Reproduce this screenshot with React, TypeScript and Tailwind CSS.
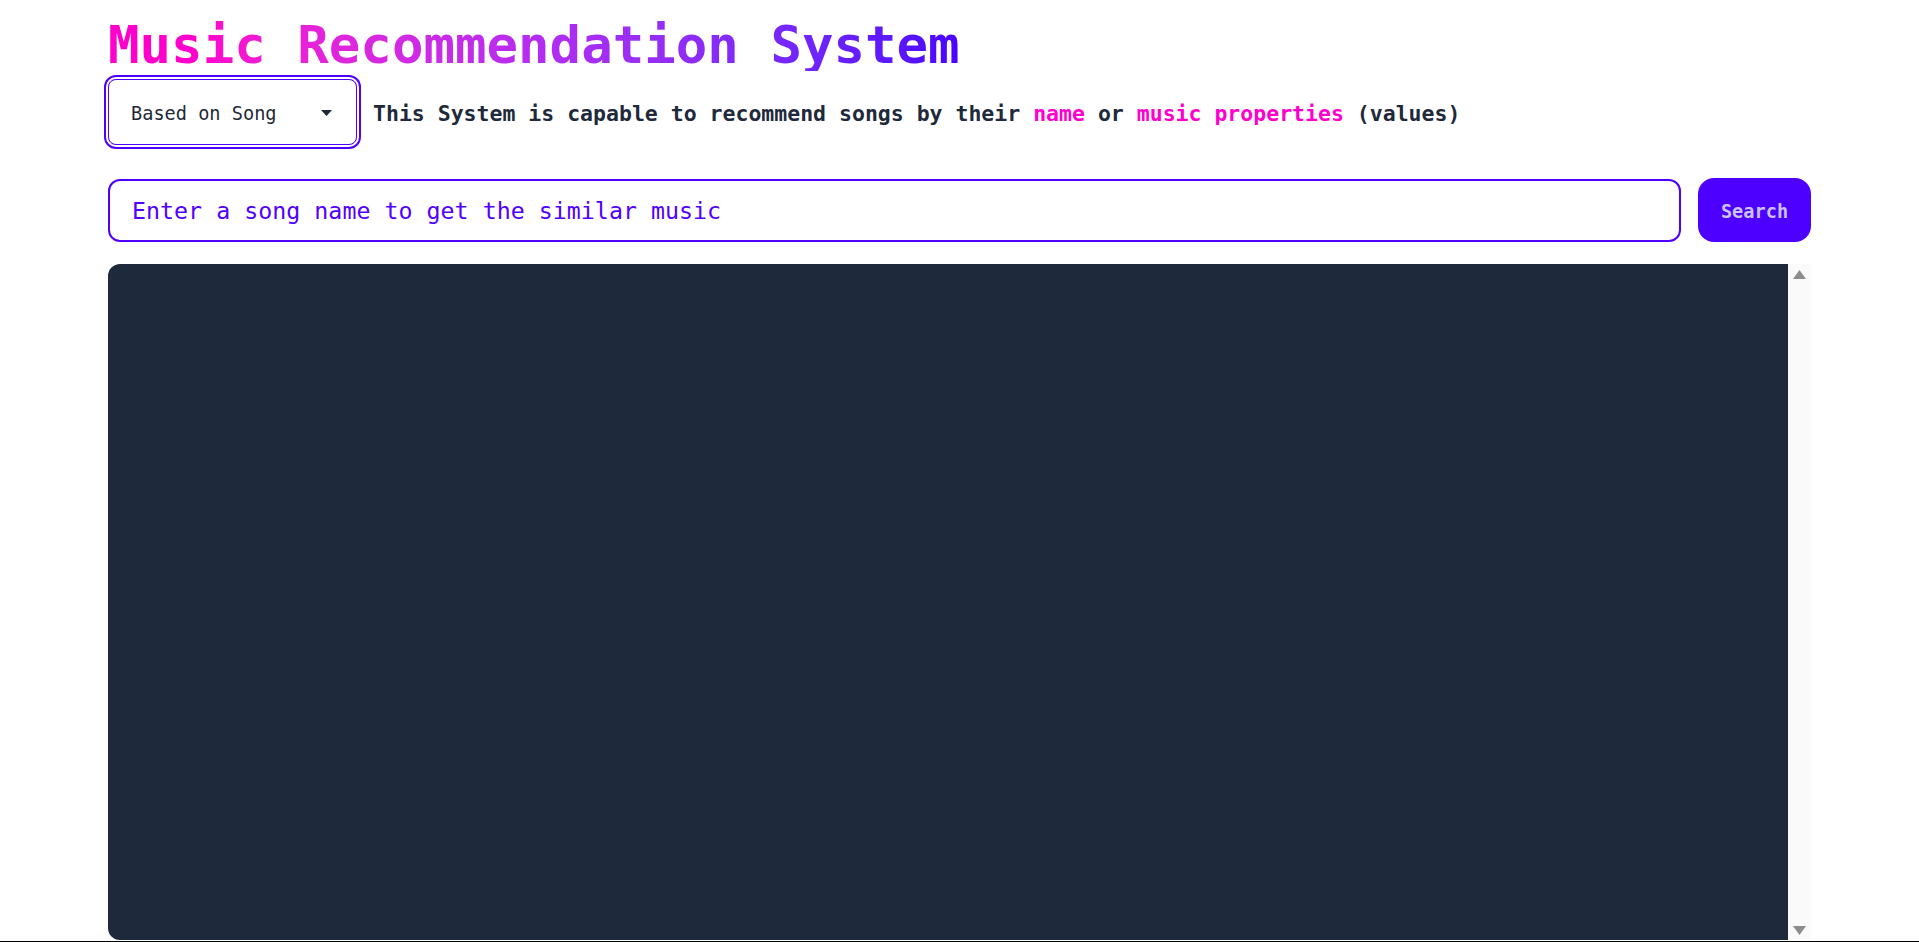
import React from "react";

const mono = { fontFamily: '"DejaVu Sans Mono", "Liberation Mono", monospace' };

export default function App() {
  return (
    <div className="h-[942px] w-full overflow-hidden bg-white flex flex-col" style={mono}>
      <div className="flex-1 flex flex-col px-[108px] min-h-0">
        <div className="pt-[19px]">
          <h1 className="inline-block text-[52.4px] leading-[52px] font-bold bg-linear-to-r from-[#ff00cc] from-10% via-[#b52cf0] to-[#4a00ff] bg-clip-text text-transparent">
            Music Recommendation System
          </h1>
        </div>
        <div className="mt-[8px] flex items-center">
          <div className="w-[249px] h-[66px] rounded-lg border border-[#5000ff] ring-2 ring-[#5000ff] ring-offset-2 flex items-center justify-between pl-[22px] pr-[24px] pt-[4px] text-[18.6px] text-[#1f2937]">
            <span>Based on Song</span>
            <svg width="11" height="6" viewBox="0 0 11 6" className="-mt-[3px]">
              <path d="M0 0 L11 0 L5.5 6 Z" fill="#1f2937" />
            </svg>
          </div>
          <p className="ml-[16px] mt-[5px] text-[21.5px] font-bold text-[#1e293b]">
            This System is capable to recommend songs by their{" "}
            <span className="text-[#ff00cc]">name</span> or{" "}
            <span className="text-[#ff00cc]">music properties</span> (values)
          </p>
        </div>
        <div className="mt-[33px] flex items-center gap-[17px]">
          <div className="flex-1 h-[63px] rounded-xl border-2 border-[#5000ff] flex items-center pl-[22px] pt-[2px] text-[23.3px] text-[#5200ff]">
            Enter a song name to get the similar music
          </div>
          <button className="w-[113px] h-[64px] rounded-2xl bg-[#4d00ff] text-[#cbc3ff] text-[18.6px] font-bold pt-[3px]">
            Search
          </button>
        </div>
        <div className="mt-[22px] flex-1 flex min-h-0">
          <div className="flex-1 bg-[#1e293b] rounded-l-xl" />
          <div className="w-[23px] bg-[#fafafa] flex flex-col items-center justify-between pt-[6px] pb-[5px]">
            <svg width="13" height="9" viewBox="0 0 13 9">
              <path d="M6.5 0 L13 9 L0 9 Z" fill="#8c8c8c" />
            </svg>
            <svg width="13" height="9" viewBox="0 0 13 9">
              <path d="M0 0 L13 0 L6.5 9 Z" fill="#8c8c8c" />
            </svg>
          </div>
        </div>
      </div>
      <div className="h-[1px] mt-[1px] bg-black" />
    </div>
  );
}
